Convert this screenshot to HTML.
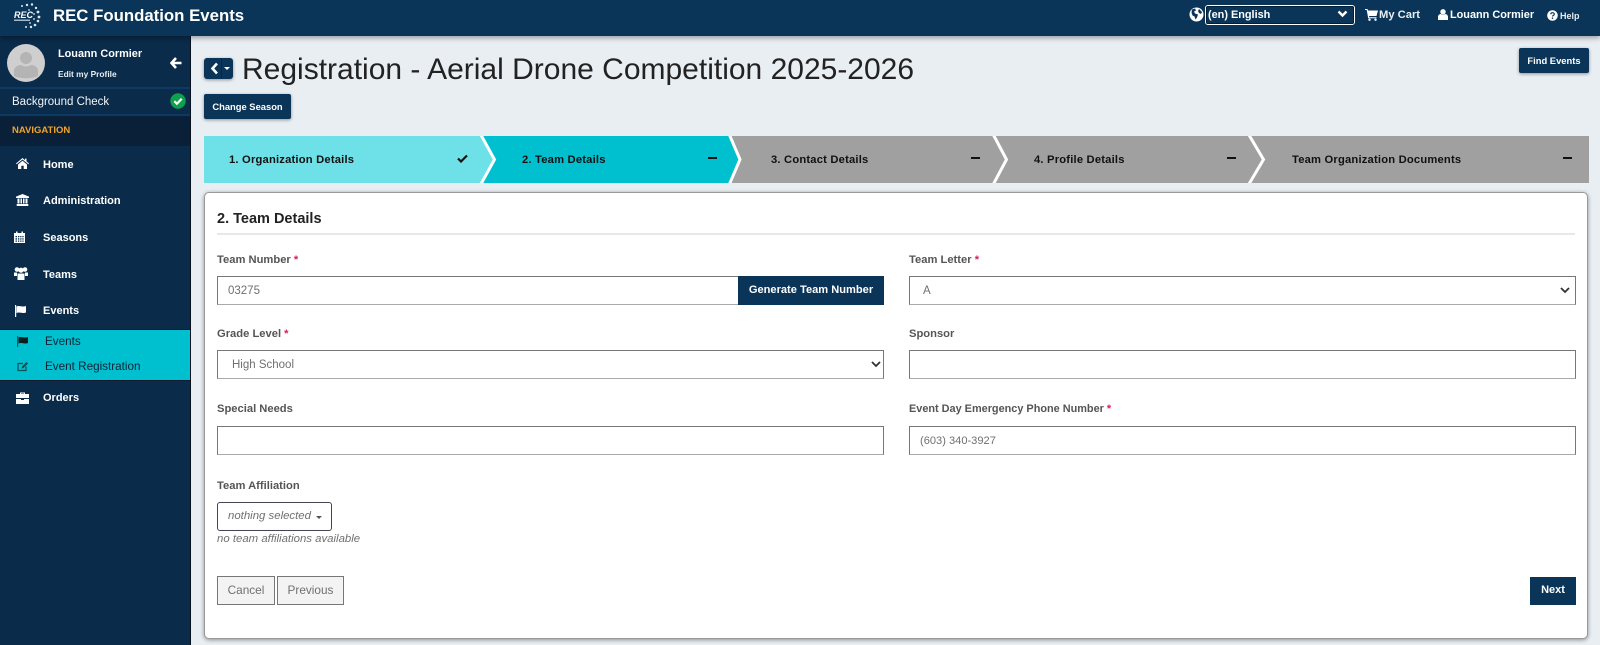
<!DOCTYPE html>
<html lang="en"><head><meta charset="utf-8"><title>Registration</title>
<style>
html,body{margin:0;padding:0}
body{width:1600px;height:645px;overflow:hidden;background:#e9eef3;position:relative;font-family:"Liberation Sans",sans-serif;color:#222}
.a{position:absolute;white-space:nowrap}
.t{position:absolute;white-space:nowrap;line-height:16px}
svg{position:absolute;display:block}
.nav{color:#fff;font-weight:bold;font-size:11px;left:43px}
.lb{color:#555;font-weight:bold;font-size:11.2px}
.lb i{color:#e0184d;font-style:normal}
.in{position:absolute;box-sizing:border-box;background:#fff;border:1px solid #777;border-bottom-color:#aaa;height:29px;font-size:11.500px;color:#707070;line-height:29px;padding-left:10px}
.st{font-size:11.2px;font-weight:bold;color:#111;letter-spacing:.2px}
.dash{position:absolute;top:157px;width:9px;height:2px;background:#111}
.btn{position:absolute;box-sizing:border-box;background:#0a3558;color:#fff;font-size:9.400px;font-weight:bold;text-align:center;border-radius:2px;box-shadow:0 1px 3px rgba(0,0,0,.4)}
.gb{position:absolute;box-sizing:border-box;background:#f3f3f3;border:1px solid #777;color:#707070;font-size:11.800px;text-align:center;line-height:27px;height:29px;top:576px}
</style></head><body>

<!-- main card -->
<div class="a" style="left:204px;top:192px;width:1384px;height:447px;box-sizing:border-box;background:#fff;border:1px solid #999;border-radius:5px;box-shadow:0 1px 4px rgba(0,0,0,.4)"></div>

<!-- header -->
<div class="a" style="left:0;top:0;width:1600px;height:36px;background:#0a3558;box-shadow:0 2px 5px rgba(0,0,0,.35);z-index:3">
<svg style="left:12px;top:2px" width="30" height="30" viewBox="0 0 30 30"><g fill="#dfe6ee"><circle cx="15" cy="3" r="1.200"/><circle cx="20" cy="2.500" r="1.200"/><circle cx="24" cy="6" r="1.200"/><circle cx="26" cy="10" r="1.400"/><circle cx="27" cy="15" r="1.400"/><circle cx="26" cy="19" r="1.300"/><circle cx="23" cy="23" r="1.300"/><circle cx="19" cy="25" r="1.200"/><circle cx="14" cy="25" r="1"/><circle cx="10" cy="4" r="1"/><circle cx="17" cy="8" r=".9"/><circle cx="22" cy="12" r=".9"/><circle cx="22" cy="17" r=".9"/><circle cx="18" cy="21" r=".9"/></g><text x="2" y="16" font-family="Liberation Sans" font-size="9" font-weight="bold" font-style="italic" fill="#fff">REC</text><rect x="2" y="17.500" width="16" height="1.500" fill="#aab8c6"/></svg>
<div class="t" style="left:53px;top:6px;font-size:16.800px;line-height:20px;font-weight:bold;color:#fff">REC Foundation Events</div>
<svg style="left:1189px;top:7px" width="15" height="15" viewBox="0 0 15 15"><circle cx="7.500" cy="7.500" r="7" fill="#fff"/><path d="M3 2.500l3-1 1 2-2 1 1 2 3 1-1 3-1.500 2-1-3-2-1-1-3zM10 2l3 3-1 2-2-1-1-2z" fill="#0a3558"/></svg>
<div class="a" style="left:1205px;top:5px;width:150px;height:20px;box-sizing:border-box;border:1px solid #fff;border-radius:3px;outline:1px solid #061c30;outline-offset:-2px"></div>
<div class="t" style="left:1208px;top:7px;font-size:10.900px;font-weight:bold;color:#fff">(en) English</div>
<svg style="left:1337px;top:10px" width="11" height="8" viewBox="0 0 11 8"><path d="M1.500 1.500l4 4 4-4" fill="none" stroke="#fff" stroke-width="2.400"/></svg>
<svg style="left:1365px;top:9px" width="13" height="12" viewBox="0 0 13 12"><path d="M0 0h2.500l.5 1.500H13l-1.500 5.500H4l.3 1.200H11.500v1H3.200L1.700 1H0z" fill="#fff"/><circle cx="4.500" cy="10.700" r="1.200" fill="#fff"/><circle cx="10.500" cy="10.700" r="1.200" fill="#fff"/></svg>
<div class="t" style="left:1379px;top:7px;font-size:11.200px;font-weight:bold;color:#e8edf2">My Cart</div>
<svg style="left:1438px;top:9px" width="10" height="11" viewBox="0 0 10 11"><circle cx="5" cy="2.800" r="2.700" fill="#fff"/><path d="M0 11V8c0-2 1.500-3 3-3 1 1 3 1 4 0 1.500 0 3 1 3 3v3z" fill="#fff"/></svg>
<div class="t" style="left:1450px;top:7px;font-size:10.900px;font-weight:bold;color:#fff">Louann Cormier</div>
<svg style="left:1547px;top:10px" width="11" height="11" viewBox="0 0 11 11"><circle cx="5.500" cy="5.500" r="5.300" fill="#fff"/><path d="M3.800 4.200c0-2 3.500-2 3.500 0 0 1.200-1.800 1.200-1.800 2.300" fill="none" stroke="#0a3558" stroke-width="1.200"/><rect x="4.800" y="7.500" width="1.400" height="1.400" fill="#0a3558"/></svg>
<div class="t" style="left:1560px;top:8px;font-size:9px;font-weight:bold;color:#e8edf2">Help</div>
</div>

<!-- sidebar -->
<div class="a" style="left:0;top:36px;width:191px;height:609px;box-sizing:border-box;background:#0a2b4a;border-right:1px solid #07111f;z-index:2">
<div class="a" style="left:0;top:51px;width:190px;height:2px;background:#0d3a63"></div>
<div class="a" style="left:0;top:78px;width:190px;height:2px;background:#0d3a63"></div>
<div class="a" style="left:0;top:80px;width:190px;height:30px;background:#0a1f38"></div>
<div class="a" style="left:0;top:293px;width:190px;height:52px;background:#00bfcf;border-top:1px solid #07182c;border-bottom:1px solid #07182c;box-sizing:border-box"></div>
</div>
<div class="a" style="left:0;top:0;width:191px;height:645px;z-index:4">
<svg style="left:7px;top:44px" width="38" height="38" viewBox="0 0 38 38"><circle cx="19" cy="19" r="19" fill="#cfcfcf"/><circle cx="19" cy="14" r="6" fill="#b4b4b4"/><path d="M7 32v-5c0-4 4-6 7-6 3 2 7 2 10 0 3 0 7 2 7 6v5c-6 3-18 3-24 0z" fill="#b4b4b4"/></svg>
<div class="t" style="left:58px;top:46px;font-size:10.900px;font-weight:bold;color:#fff">Louann Cormier</div>
<div class="t" style="left:58px;top:66px;font-size:8.400px;font-weight:bold;color:#e8edf2">Edit my Profile</div>
<svg style="left:170px;top:57px" width="12" height="12" viewBox="0 0 12 12"><path d="M6 1L1.500 6 6 11M2 6h9.500" fill="none" stroke="#fff" stroke-width="2.600"/></svg>
<div class="t" style="left:12px;top:94px;font-size:11.500px;color:#f2f5f8">Background Check</div>
<svg style="left:170px;top:93px" width="16" height="16" viewBox="0 0 16 16"><circle cx="8" cy="8" r="7.700" fill="#0ea04c"/><path d="M4.300 8.200l2.600 2.500 4.800-5" fill="none" stroke="#fff" stroke-width="2.200"/></svg>
<div class="t" style="left:12px;top:123px;font-size:9.500px;font-weight:bold;color:#f0a52a">NAVIGATION</div>

<svg style="left:16px;top:158px" width="13" height="11" viewBox="0 0 13 11"><path d="M6.500 0L0 5.500l.7.800L6.500 1.500l5.800 4.800.7-.8L10.500 3.400V.6H9v1.500zM2 6.500V11h3.300V7.800h2.400V11H11V6.500L6.500 2.800z" fill="#fff"/></svg>
<div class="t nav" style="top:157px">Home</div>
<svg style="left:16px;top:194px" width="13" height="12" viewBox="0 0 13 12"><path d="M6.500 0L13 2.600V4H0V2.600zM1.500 4.500h2v5h-2zM4.500 4.500h1.500v5H4.500zM7 4.500h1.500v5H7zM9.500 4.500h2v5h-2zM.7 10h11.600v2H.7z" fill="#fff"/></svg>
<div class="t nav" style="top:193px">Administration</div>
<svg style="left:14px;top:231px" width="11" height="12" viewBox="0 0 11 12"><path d="M0 2h2V.5h1.500V2h4V.5H9V2h2v10H0z" fill="#fff"/><path d="M1.500 5h1.500v1.300H1.500zM4 5h1.300v1.300H4zM6.200 5h1.300v1.300H6.200zM8.300 5h1.300v1.300H8.300zM1.500 7.300h1.500v1.300H1.500zM4 7.300h1.300v1.300H4zM6.200 7.300h1.300v1.300H6.200zM8.300 7.300h1.300v1.300H8.300zM1.500 9.500h1.500v1.300H1.500zM4 9.500h1.300v1.300H4zM6.200 9.500h1.300v1.300H6.200zM8.300 9.500h1.300v1.300H8.300z" fill="#0a2b4a"/></svg>
<div class="t nav" style="top:230px">Seasons</div>
<svg style="left:14px;top:267px" width="14" height="13" viewBox="0 0 14 13"><circle cx="3" cy="2.500" r="2.300" fill="#fff"/><circle cx="7" cy="3.200" r="2.600" fill="#fff"/><circle cx="11" cy="2.500" r="2.300" fill="#fff"/><path d="M0 5.500h3v3.500H0zM11 5.500h3v3.500h-3zM3.500 6.500h7v6.500h-7z" fill="#fff"/></svg>
<div class="t nav" style="top:267px">Teams</div>
<svg style="left:15px;top:305px" width="12" height="12" viewBox="0 0 12 12"><rect x="0" y="0" width="1.200" height="12" fill="#fff"/><path d="M1.500 1.500c3-1.500 5 1 9.500-.5v6.500c-4 1.500-6-1-9.500.5z" fill="#fff"/></svg>
<div class="t nav" style="top:303px">Events</div>
<svg style="left:17px;top:336px" width="12" height="11" viewBox="0 0 12 11"><rect x="0" y="0" width="1.200" height="11" fill="#0a5a55"/><path d="M1.500 1.500c3-1.500 5 1 9.500-.5v6c-4 1.500-6-1-9.500.5z" fill="#07211e"/></svg>
<div class="t" style="left:45px;top:334px;font-size:11.700px;color:#0c2438">Events</div>
<svg style="left:17px;top:361px" width="12" height="11" viewBox="0 0 12 11"><path d="M9 5.500V9.500H1V2.500h5" fill="none" stroke="#0b4f57" stroke-width="1.200"/><path d="M4.500 7.500l.5-2L9.500 1l1.500 1.500L6.500 7z" fill="#0b4f57"/></svg>
<div class="t" style="left:45px;top:359px;font-size:11.700px;color:#0c2438">Event Registration</div>
<svg style="left:16px;top:392px" width="13" height="12" viewBox="0 0 13 12"><path d="M4 2V.5h5V2h4v4H0V2zM5 1.500V2h3v-.5zM0 7h5v1h3V7h5v5H0z" fill="#fff"/></svg>
<div class="t nav" style="top:390px">Orders</div>
</div>

<!-- page header -->
<div class="a" style="left:204px;top:58px;width:29px;height:21px;background:#0a3558;border-radius:3px;box-shadow:0 1px 3px rgba(0,0,0,.4)">
<svg style="left:6px;top:4px" width="9" height="13" viewBox="0 0 9 13"><path d="M7 1.500L2.500 6.500l4.500 5" fill="none" stroke="#fff" stroke-width="2.600"/></svg>
<div class="a" style="left:17px;top:0;width:1px;height:21px;background:#072641"></div>
<div class="a" style="left:20px;top:9px;width:0;height:0;border-left:3px solid transparent;border-right:3px solid transparent;border-top:3px solid #fff"></div>
</div>
<div class="t" style="left:242px;top:51px;font-size:30px;line-height:38px;color:#222">Registration - Aerial Drone Competition 2025-2026</div>
<div class="btn" style="left:204px;top:94px;width:87px;height:25px;line-height:25px">Change Season</div>
<div class="btn" style="left:1519px;top:48px;width:70px;height:25px;line-height:25px">Find Events</div>

<!-- steps -->
<svg style="left:204px;top:136px" width="1385" height="47" viewBox="0 0 1385 47">
<rect width="1385" height="47" fill="#a0a0a0"/>
<polygon points="0,0 277,0 290.500,23.500 277,47 0,47" fill="#6de0e8"/>
<polygon points="277,0 525.500,0 535,23.500 525.500,47 277,47 290.500,23.500" fill="#00bfcf"/>
<path d="M277 -1L290.500 23.500 277 48M525.500 -1L536 23.500 525.500 48M789.500 -1L802.500 23.500 789.500 48M1045 -1L1059.500 23.500 1045 48" fill="none" stroke="#fff" stroke-width="3"/>
</svg>
<div class="t st" style="left:229px;top:152px">1. Organization Details</div>
<svg style="left:457px;top:154px" width="11" height="9" viewBox="0 0 11 9"><path d="M1 4.500l3 3 6-6" fill="none" stroke="#111" stroke-width="2.200"/></svg>
<div class="t st" style="left:522px;top:152px">2. Team Details</div>
<div class="dash" style="left:708px"></div>
<div class="t st" style="left:771px;top:152px">3. Contact Details</div>
<div class="dash" style="left:971px"></div>
<div class="t st" style="left:1034px;top:152px">4. Profile Details</div>
<div class="dash" style="left:1227px"></div>
<div class="t st" style="left:1292px;top:152px">Team Organization Documents</div>
<div class="dash" style="left:1563px"></div>

<!-- form -->
<div class="t" style="left:217px;top:210px;font-size:14.500px;line-height:18px;font-weight:bold;color:#222">2. Team Details</div>
<div class="a" style="left:217px;top:233px;width:1358px;height:2px;background:#e8e8e8"></div>

<div class="t lb" style="left:217px;top:252px">Team Number <i>*</i></div>
<div class="in" style="left:217px;top:276px;width:522px">03275</div>
<div class="a" style="left:738px;top:276px;width:146px;height:29px;background:#0a3558;color:#fff;font-size:11.100px;font-weight:bold;text-align:center;line-height:28px">Generate Team Number</div>

<div class="t lb" style="left:909px;top:252px">Team Letter <i>*</i></div>
<div class="in" style="left:909px;top:276px;width:667px;padding-left:13px">A</div>
<svg style="left:1560px;top:287px" width="10" height="7" viewBox="0 0 10 7"><path d="M1 1l4 4 4-4" fill="none" stroke="#333" stroke-width="1.800"/></svg>

<div class="t lb" style="left:217px;top:326px">Grade Level <i>*</i></div>
<div class="in" style="left:217px;top:350px;width:667px;padding-left:14px">High School</div>
<svg style="left:871px;top:361px" width="10" height="7" viewBox="0 0 10 7"><path d="M1 1l4 4 4-4" fill="none" stroke="#333" stroke-width="1.800"/></svg>

<div class="t lb" style="left:909px;top:326px">Sponsor</div>
<div class="in" style="left:909px;top:350px;width:667px"></div>

<div class="t lb" style="left:217px;top:401px">Special Needs</div>
<div class="in" style="left:217px;top:426px;width:667px"></div>

<div class="t lb" style="left:909px;top:401px;font-size:10.900px">Event Day Emergency Phone Number <i>*</i></div>
<div class="in" style="left:909px;top:426px;width:667px;font-size:11.100px">(603) 340-3927</div>

<div class="t lb" style="left:217px;top:478px">Team Affiliation</div>
<div class="a" style="left:217px;top:502px;width:115px;height:29px;box-sizing:border-box;background:#fff;border:1px solid #445;border-radius:3px;font-size:11.400px;font-style:italic;color:#707070;line-height:27px;padding-left:10px">nothing selected</div>
<div class="a" style="left:316px;top:516px;width:0;height:0;border-left:3px solid transparent;border-right:3px solid transparent;border-top:3px solid #555"></div>
<div class="t" style="left:217px;top:531px;font-size:11.400px;font-style:italic;color:#707070">no team affiliations available</div>

<div class="gb" style="left:217px;width:58px">Cancel</div>
<div class="gb" style="left:277px;width:67px">Previous</div>
<div class="a" style="left:1530px;top:577px;width:46px;height:28px;background:#0a3558;color:#fff;font-size:11px;font-weight:bold;text-align:center;line-height:27px">Next</div>
</body></html>
